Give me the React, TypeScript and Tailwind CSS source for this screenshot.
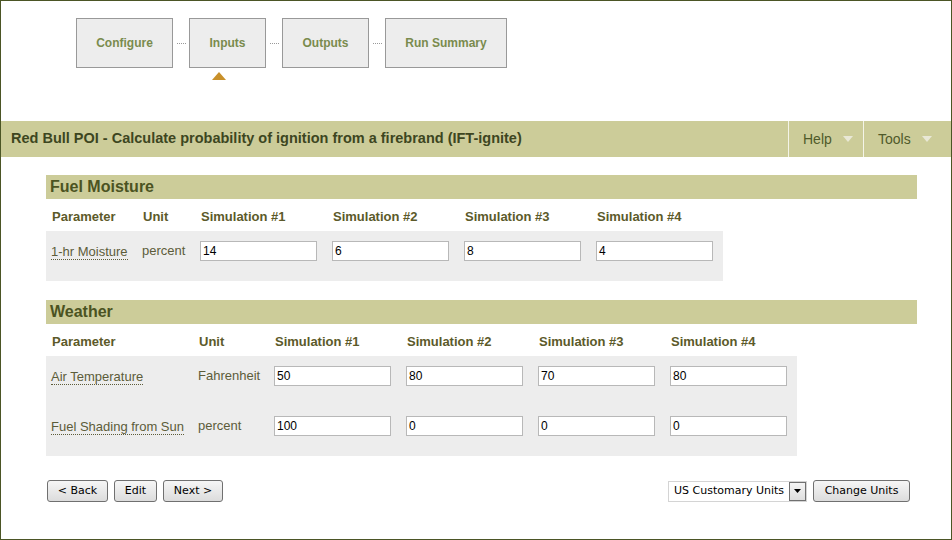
import React from "react";

const steps = [
  { label: "Configure", w: "w-[97px]" },
  { label: "Inputs", w: "w-[77px]", active: true },
  { label: "Outputs", w: "w-[87px]" },
  { label: "Run Summary", w: "w-[122px]" },
];

type Row = { name: string; unit: string; values: string[] };

const fuelRows: Row[] = [{ name: "1-hr Moisture", unit: "percent", values: ["14", "6", "8", "4"] }];

const weatherRows: Row[] = [
  { name: "Air Temperature", unit: "Fahrenheit", values: ["50", "80", "70", "80"] },
  { name: "Fuel Shading from Sun", unit: "percent", values: ["100", "0", "0", "0"] },
];

function SectionHeader({ title }: { title: string }) {
  return (
    <div className="h-[24px] bg-[#cccc99] pl-[4px] flex items-center text-[16px] font-bold text-[#4b5322]">
      {title}
    </div>
  );
}

function ParamTable({ rows, cols }: { rows: Row[]; cols: string }) {
  return (
    <div className={`grid w-fit ${cols}`}>
      {["Parameter", "Unit", "Simulation #1", "Simulation #2", "Simulation #3", "Simulation #4"].map((h) => (
        <div key={h} className="h-[32px] pt-[10px] pl-[6px] text-[13px] font-bold text-[#5c5a2a] leading-[15px]">
          {h}
        </div>
      ))}
      {rows.map((r) => (
        <React.Fragment key={r.name}>
          <div className="bg-[#ededed] pt-[10px] pb-[20px] pl-[5px]">
            <div className="h-[20px] flex items-center pt-[2px]">
              <span className="text-[13px] text-[#5c5c3a] border-b border-dotted border-[#5c5c3a] leading-[14px]">
                {r.name}
              </span>
            </div>
          </div>
          <div className="bg-[#ededed] pt-[10px] pb-[20px] pl-[5px]">
            <div className="h-[20px] flex items-center text-[13px] text-[#5c5c3a]">{r.unit}</div>
          </div>
          {r.values.map((v, i) => (
            <div key={i} className="bg-[#ededed] pt-[10px] pb-[20px] pl-[5px]">
              <div className="h-[20px] w-[117px] bg-white border border-[#b8b8b8] pl-[2px] flex items-center text-[12px] text-black">
                {v}
              </div>
            </div>
          ))}
        </React.Fragment>
      ))}
    </div>
  );
}

function Btn({ children, w }: { children: React.ReactNode; w: string }) {
  return (
    <button
      className={`${w} h-[22px] rounded-[3px] border border-[#707070] bg-gradient-to-b from-[#f6f6f6] to-[#dcdcdc] text-[11px] text-black font-['DejaVu_Sans',sans-serif] flex items-center justify-center`}
    >
      {children}
    </button>
  );
}

function MenuArrow() {
  return (
    <svg width="10" height="6" viewBox="0 0 10 6" className="ml-[11px]">
      <path d="M0 0h10L5 6z" fill="#e9e8d6" />
    </svg>
  );
}

export default function App() {
  return (
    <div className="w-[952px] h-[540px] border border-[#4b5525] bg-white overflow-hidden font-['Liberation_Sans',Arial,sans-serif]">
      {/* Wizard steps */}
      <div className="flex items-center pl-[75px] pt-[17px]">
        {steps.map((s, i) => (
          <React.Fragment key={s.label}>
            {i > 0 && (
              <div className="w-[16px] flex justify-center">
                <div className="w-[9px] border-t border-dotted border-[#999]" />
              </div>
            )}
            <div
              className={`relative ${s.w} h-[50px] bg-[#ededed] border border-[#999] flex items-center justify-center text-[12px] font-bold text-[#7a8b4d]`}
            >
              {s.label}
              {s.active && (
                <svg width="14" height="8" viewBox="0 0 14 8" className="absolute left-[22px] top-[53px]">
                  <path d="M7 0L14 8H0z" fill="#c8902a" />
                </svg>
              )}
            </div>
          </React.Fragment>
        ))}
      </div>

      {/* Title bar */}
      <div className="mt-[53px] h-[36px] bg-[#cccc99] flex items-stretch">
        <div className="flex-1 pl-[10px] flex items-center text-[14.5px] font-bold text-[#3d461f]">
          Red Bull POI - Calculate probability of ignition from a firebrand (IFT-ignite)
        </div>
        <div className="w-[75px] border-l border-[#f4f4e8] flex items-center pl-[14px] text-[14px] text-[#4f5a2a]">
          Help
          <MenuArrow />
        </div>
        <div className="w-[88px] border-l border-[#f4f4e8] flex items-center pl-[14px] text-[14px] text-[#4f5a2a]">
          Tools
          <MenuArrow />
        </div>
      </div>

      {/* Content */}
      <div className="ml-[45px] mr-[34px] mt-[18px]">
        <SectionHeader title="Fuel Moisture" />
        <ParamTable rows={fuelRows} cols="grid-cols-[91px_58px_132px_132px_132px_132px]" />

        <div className="mt-[19px]">
          <SectionHeader title="Weather" />
          <ParamTable rows={weatherRows} cols="grid-cols-[147px_76px_132px_132px_132px_132px]" />
        </div>

        <div className="mt-[24px] flex items-center justify-between pl-[1px] pr-[7px]">
          <div className="flex items-center gap-[6px]">
            <Btn w="w-[61px]">&lt; Back</Btn>
            <Btn w="w-[43px]">Edit</Btn>
            <Btn w="w-[60px]">Next &gt;</Btn>
          </div>
          <div className="flex items-center gap-[6px]">
            <div className="w-[139px] h-[21px] border border-[#d4d4d4] bg-white flex items-center justify-between font-['DejaVu_Sans',sans-serif] text-[11px] text-black">
              <span className="pl-[5px]">US Customary Units</span>
              <div className="w-[17px] h-[19px] border border-[#707070] bg-gradient-to-b from-[#f4f4f4] to-[#dedede] flex items-center justify-center">
                <svg width="7" height="4" viewBox="0 0 7 4">
                  <path d="M0 0h7L3.5 4z" fill="#000" />
                </svg>
              </div>
            </div>
            <Btn w="w-[97px]">Change Units</Btn>
          </div>
        </div>
      </div>
    </div>
  );
}
